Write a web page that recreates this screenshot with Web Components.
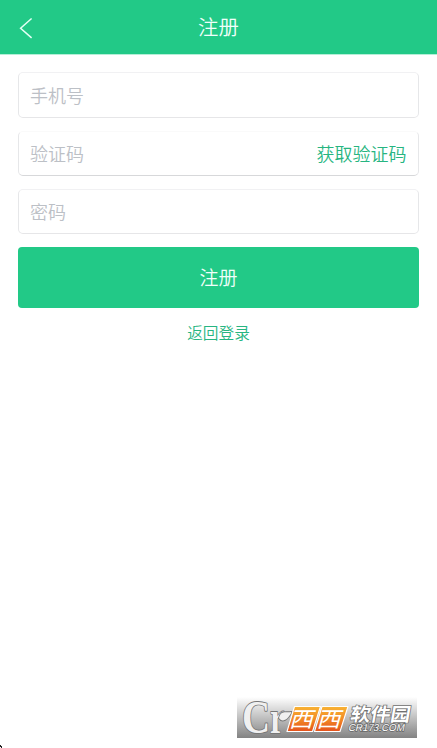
<!DOCTYPE html>
<html lang="zh-CN">
<head>
<meta charset="utf-8">
<title>注册</title>
<style>
html,body{margin:0;height:100%;background:#fff;overflow:hidden}
body{font-family:"Noto Sans CJK SC DemiLight","Noto Sans CJK SC","Liberation Sans",sans-serif;font-weight:350}
</style>
</head>
<body>
<register-page></register-page>
<script>
const define = (name, html) => customElements.define(name, class extends HTMLElement {
  constructor() {
    super();
    const t = document.createElement('template');
    t.innerHTML = html;
    this.attachShadow({mode: 'open'}).append(t.content.cloneNode(true));
  }
});

define('nav-bar', `
<style>
:host{display:grid;grid-template-columns:52px 1fr 52px;align-items:center;height:54px;background:#22c987;color:#f0fffa;font-size:20.4px;line-height:52px;box-shadow:0 1px 0 #b4efd7}
.title{text-align:center;padding-bottom:2px}
svg{display:block;margin:2px 0 0 18px}
</style>
<svg width="16" height="22" viewBox="0 0 16 22" fill="none" stroke="#e4fff5" stroke-width="1.5"><path d="M13.6 1.5 2.6 11.2 13.6 20.9"/></svg>
<div class="title"><slot></slot></div>`);

define('text-field', `
<style>
:host{display:flex;justify-content:space-between;align-items:center;box-sizing:border-box;height:46px;border:1px solid #e6e7e9;border-top-color:var(--top,#f1f1f3);border-bottom-color:var(--bottom,#e6e6e8);border-radius:5px;padding:0 11px;font-size:18px;line-height:42px;color:#bcc0c6;background:#fff}
</style>
<span><slot></slot></span><slot name="action"></slot>`);

define('primary-button', `
<style>
:host{display:block;height:61px;line-height:59px;border-radius:4px;background:#22c987;color:#f0fffa;font-size:19px;text-align:center}
</style><slot></slot>`);

define('text-link', `
<style>:host{display:block;color:#27b581}</style><slot></slot>`);

define('site-mark', `
<style>:host{display:block;width:180px;height:41px}svg{display:block;overflow:visible}</style>
<svg width="180" height="41" viewBox="0 1 180 41">
<defs>
<linearGradient id="bg" x1="0" y1="0" x2="0" y2="1"><stop offset="0" stop-color="#fff"/><stop offset=".2" stop-color="#e6e6e6"/><stop offset="1" stop-color="#838383"/></linearGradient>
<linearGradient id="or" x1="0" y1="0" x2="0" y2="1"><stop offset="0" stop-color="#f8b334"/><stop offset=".5" stop-color="#f28a26"/><stop offset="1" stop-color="#e4511c"/></linearGradient>
</defs>
<rect y="1" width="180" height="41" fill="url(#bg)"/>
<g stroke-linejoin="round" font-family="Liberation Serif,serif" font-weight="700" fill="#f0f0f0" stroke="#777" stroke-width="1.8" paint-order="stroke">
<text transform="translate(5 37) scale(.83 1)" x="0" y="0" font-size="47">C</text>
<text transform="translate(33 37) scale(.7 1)" x="0" y="0" font-size="47">r</text>
<path d="M42 22C44 14 48 17 54.5 16C51 24 45 27 42 22Z"/>
</g>
<g font-family="Noto Sans CJK SC,sans-serif">
<g stroke="#fff" stroke-width="1.1" stroke-linejoin="round" fill="url(#or)"><path d="M57.5 10.5H83.5L75.5 35.5H50Z"/><path d="M85 10.5H111L103 35.5H77.5Z"/></g>
<g transform="skewX(-16)" fill="#fff" font-weight="400"><text transform="translate(60.7 31) scale(1.12 1)" x="0" y="0" font-size="21.5">西</text><text transform="translate(88.2 31) scale(1.12 1)" x="0" y="0" font-size="21.5">西</text></g>
<text transform="skewX(-10)" x="117" y="25" font-weight="700" font-size="18.5" textLength="60" lengthAdjust="spacingAndGlyphs" fill="#fff" stroke="#707070" stroke-width="1.5" paint-order="stroke">软件园</text>
<text transform="skewX(-12)" x="118.5" y="35" font-family="Liberation Sans,sans-serif" font-weight="400" font-size="10" textLength="56" lengthAdjust="spacingAndGlyphs" fill="#fff" stroke="#666" stroke-width="1.5" paint-order="stroke">CR173.COM</text>
</g></svg>`);

define('register-page', `
<style>
:host{display:flex;flex-direction:column;height:100vh;box-sizing:border-box}
nav-bar{flex:none}
form{display:flex;flex-direction:column;margin:0;padding:18px 18px 0}
text-field{margin-bottom:12px}
.code{margin-top:1px;--top:#fafafa;--bottom:#d7d8da}
.code,.pwd{height:45px;margin-bottom:13px;line-height:41px;padding-bottom:1px}
.code text-link{margin-right:.5px}
.back{align-self:center;margin-top:13px;font-size:15.7px;line-height:23px}
footer{margin-top:auto;display:flex;align-items:flex-end;justify-content:space-between;height:51px;padding-right:20px}
site-mark{margin-bottom:10px}
.corner{display:block;width:2px;height:3px}
</style>
<nav-bar>注册</nav-bar>
<form>
<text-field>手机号</text-field>
<text-field class="code">验证码<text-link slot="action">获取验证码</text-link></text-field>
<text-field class="pwd">密码</text-field>
<primary-button>注册</primary-button>
<text-link class="back">返回登录</text-link>
</form>
<footer><svg class="corner" viewBox="0 0 2 3"><path d="M0 0h1v1h1v2H1V2H0Z" fill="#222"/></svg><site-mark></site-mark></footer>`);
</script>
</body>
</html>
